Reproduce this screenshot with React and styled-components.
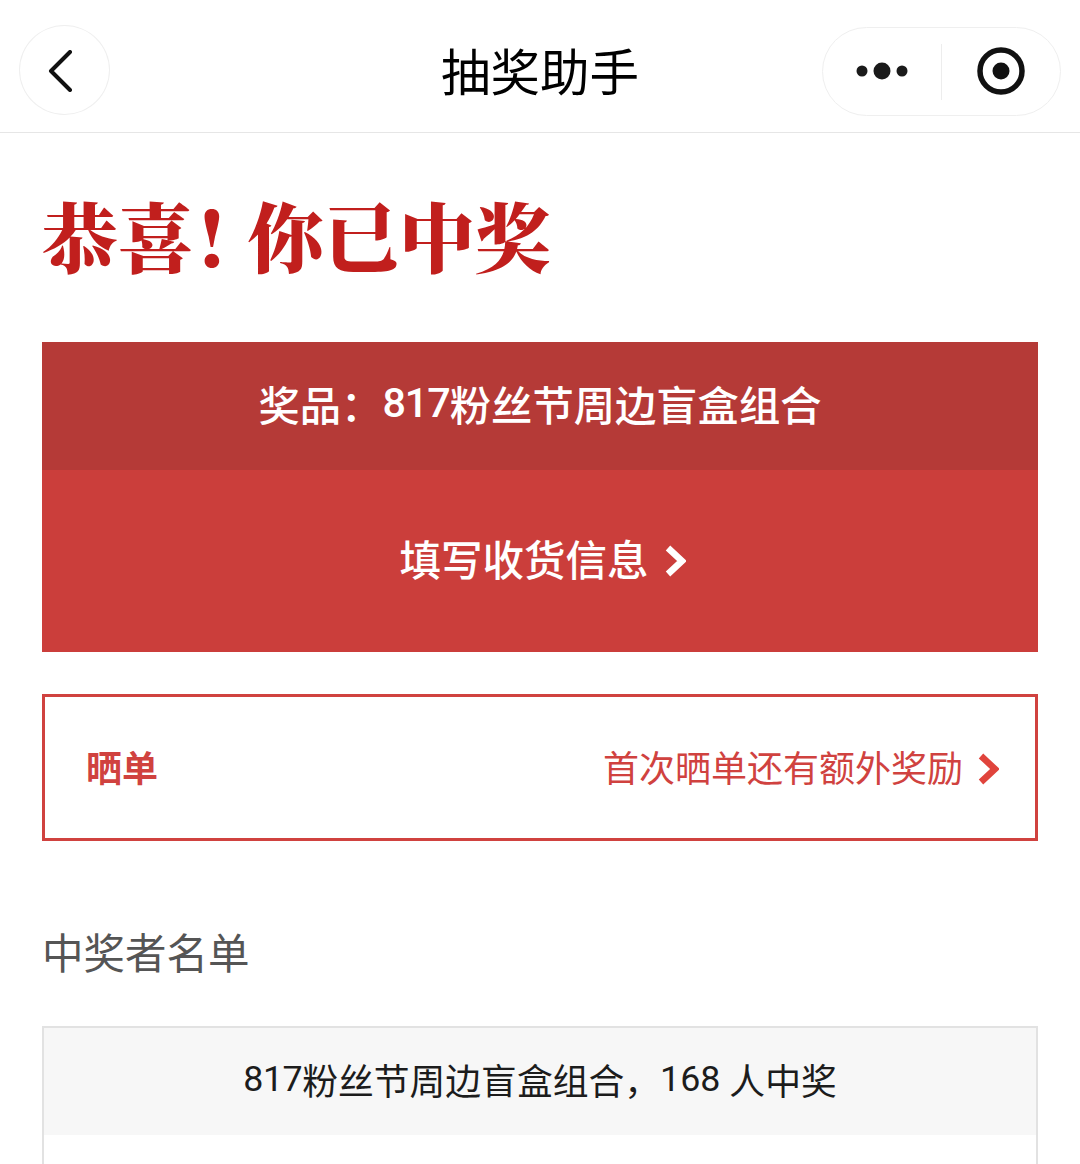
import React from 'react';
import styled, { createGlobalStyle } from 'styled-components';

const sans = `"Noto Sans CJK SC", "Noto Sans", sans-serif`;
const latin = `Roboto, "Noto Sans CJK SC", sans-serif`;

const GlobalStyle = createGlobalStyle`
  html, body {
    margin: 0;
    padding: 0;
    background: #fff;
  }
  * {
    box-sizing: border-box;
  }
`;

const Page = styled.div`
  width: 1080px;
  height: 1164px;
  overflow: hidden;
  background: #fff;
  font-family: ${sans};
`;

const NavBar = styled.header`
  height: 133px;
  border-bottom: 1px solid #e6e6e6;
  padding: 25px 19px 0 19px;
  display: grid;
  grid-template-columns: 1fr auto 1fr;
  align-items: start;
`;

const BackButton = styled.div`
  width: 91px;
  height: 90px;
  border: 1px solid #efefef;
  border-radius: 50%;
  display: flex;
  align-items: center;
  justify-content: center;
  padding: 2px 10px 0 0;
`;

const NavTitle = styled.h1`
  margin: 0;
  font-size: 49.5px;
  font-weight: 400;
  line-height: 90px;
  color: #000;
  height: 90px;
`;

const Capsule = styled.div`
  justify-self: end;
  width: 239px;
  height: 89px;
  margin-top: 2px;
  border: 1px solid #efefef;
  border-radius: 45px;
  display: flex;
  align-items: center;
`;

const CapsuleSlot = styled.div`
  flex: 1;
  display: flex;
  align-items: center;
  justify-content: center;
  padding-bottom: 2px;
`;

const CapsuleDivider = styled.div`
  width: 1px;
  height: 56px;
  background: #ededed;
`;

const Content = styled.main`
  padding: 0 42px;
`;

const Headline = styled.h2`
  margin: 0;
  padding-top: 56px;
  height: 209px;
  font-family: "Noto Serif CJK SC", "Source Han Serif SC", ${sans};
  font-size: 75.8px;
  font-weight: 900;
  line-height: 92px;
  color: #c11f1d;
  white-space: nowrap;
`;

const Bang = styled.span`
  margin: 0 ${({ $after }) => $after}px 0 4px;
`;

const PrizeCard = styled.section`
  display: flex;
  flex-direction: column;
`;

const PrizeName = styled.div`
  height: 128px;
  padding-bottom: 7px;
  background: #b53a37;
  color: #fff;
  font-size: 41.3px;
  font-weight: 500;
  display: flex;
  align-items: center;
  justify-content: center;
  white-space: pre;
`;

const Digits = styled.span`
  font-family: ${latin};
  letter-spacing: ${({ $tight }) => $tight}px;
`;

const FillButton = styled.div`
  height: 182px;
  padding: 0 0 6px 5px;
  background: #cb3e3b;
  color: #fff;
  font-size: 41.5px;
  font-weight: 500;
  display: flex;
  align-items: center;
  justify-content: center;
  gap: 15px;
`;

const ShareBox = styled.div`
  margin-top: 42px;
  height: 147px;
  border: 3px solid #d0423f;
  padding: 0 36px 4px 41px;
  display: flex;
  align-items: center;
  justify-content: space-between;
  color: #d0423f;
`;

const ShareLabel = styled.span`
  font-size: 36px;
  font-weight: 700;
`;

const ShareHint = styled.span`
  display: flex;
  align-items: center;
  gap: 14px;
  font-size: 36px;
`;

const SectionTitle = styled.h3`
  margin: 84px 0 0;
  height: 101px;
  font-size: 41.5px;
  font-weight: 400;
  line-height: 52px;
  color: #555;
`;

const WinnerTable = styled.section`
  height: 200px;
  border: 2px solid #e2e2e2;
  border-bottom: 0;
`;

const WinnerHeader = styled.div`
  height: 107px;
  padding-bottom: 5px;
  background: #f7f7f7;
  color: #1c1c1c;
  font-size: 35.8px;
  display: flex;
  align-items: center;
  justify-content: center;
  white-space: pre;
`;

const ChevronIcon = styled.svg`
  margin-top: 6px;
`;

const Chevron = ({ color }) => (
  <ChevronIcon width="22" height="32" viewBox="0 0 22 32" fill="none">
    <path d="M4 3 L18 16 L4 29" stroke={color} strokeWidth="6.5" />
  </ChevronIcon>
);

export default function App() {
  return (
    <Page>
      <GlobalStyle />
      <NavBar>
        <BackButton>
          <svg width="26" height="42" viewBox="0 0 26 42" fill="none">
            <path d="M23 2 L4 21 L23 40" stroke="#111" strokeWidth="4" strokeLinecap="round" strokeLinejoin="round" />
          </svg>
        </BackButton>
        <NavTitle>抽奖助手</NavTitle>
        <Capsule>
          <CapsuleSlot>
            <svg width="52" height="20" viewBox="0 0 52 20">
              <circle cx="6" cy="10" r="5.5" fill="#1a1a1a" />
              <circle cx="26" cy="10" r="8.5" fill="#1a1a1a" />
              <circle cx="46" cy="10" r="5.5" fill="#1a1a1a" />
            </svg>
          </CapsuleSlot>
          <CapsuleDivider />
          <CapsuleSlot>
            <svg width="48" height="48" viewBox="0 0 48 48">
              <circle cx="24" cy="24" r="21" fill="none" stroke="#111" strokeWidth="5.5" />
              <circle cx="24" cy="24" r="8.5" fill="#111" />
            </svg>
          </CapsuleSlot>
        </Capsule>
      </NavBar>
      <Content>
        <Headline>恭喜<Bang $after={21}>!</Bang>你已中奖</Headline>
        <PrizeCard>
          <PrizeName>奖品：<Digits $tight={-1}>817</Digits>粉丝节周边盲盒组合</PrizeName>
          <FillButton>
            填写收货信息
            <Chevron color="#fff" />
          </FillButton>
        </PrizeCard>
        <ShareBox>
          <ShareLabel>晒单</ShareLabel>
          <ShareHint>
            首次晒单还有额外奖励
            <Chevron color="#e0443c" />
          </ShareHint>
        </ShareBox>
        <SectionTitle>中奖者名单</SectionTitle>
        <WinnerTable>
          <WinnerHeader><Digits $tight={-0.5}>817</Digits>粉丝节周边盲盒组合，<Digits $tight={0}>168 </Digits>人中奖</WinnerHeader>
        </WinnerTable>
      </Content>
    </Page>
  );
}
